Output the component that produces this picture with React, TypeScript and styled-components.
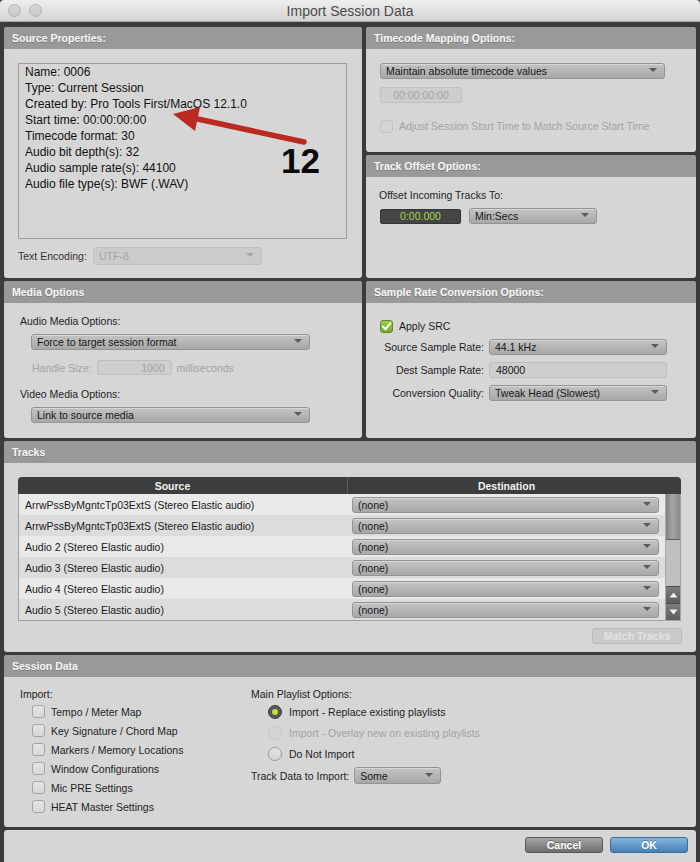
import React from "react";
import styled, { createGlobalStyle } from "styled-components";

type SizeProps = {
  $w: number;
  $h?: number;
  $disabled?: boolean;
};

type RowProps = {
  $alt: boolean;
};

const sourceLines = [
  "Name: 0006",
  "Type: Current Session",
  "Created by: Pro Tools First/MacOS 12.1.0",
  "Start time: 00:00:00:00",
  "Timecode format: 30",
  "Audio bit depth(s): 32",
  "Audio sample rate(s): 44100",
  "Audio file type(s): BWF (.WAV)",
];

const tracks = [
  "ArrwPssByMgntcTp03ExtS (Stereo Elastic audio)",
  "ArrwPssByMgntcTp03ExtS (Stereo Elastic audio)",
  "Audio 2 (Stereo Elastic audio)",
  "Audio 3 (Stereo Elastic audio)",
  "Audio 4 (Stereo Elastic audio)",
  "Audio 5 (Stereo Elastic audio)",
];

const importItems = [
  "Tempo / Meter Map",
  "Key Signature / Chord Map",
  "Markers / Memory Locations",
  "Window Configurations",
  "Mic PRE Settings",
  "HEAT Master Settings",
];

function App() {
  return (
    <>
      <GlobalStyle />
      <Window>
        <TitleBar>
          <Lights>
            <Light />
            <Light />
          </Lights>
          <Title>Import Session Data</Title>
          <span />
        </TitleBar>

        <Content>
          <TwoCols $h={251}>
            <Panel>
              <PanelHeader>Source Properties:</PanelHeader>
              <SourceBody>
                <InfoBox>
                  {sourceLines.map((line) => (
                    <div key={line}>{line}</div>
                  ))}
                </InfoBox>
                <EncodingRow>
                  <EncodingLabel>Text Encoding:</EncodingLabel>
                  <Dropdown $w={169} $h={18} $disabled>
                    UTF-8
                  </Dropdown>
                </EncodingRow>
              </SourceBody>
            </Panel>

            <Stack>
              <Panel $h={125}>
                <PanelHeader>Timecode Mapping Options:</PanelHeader>
                <TimecodeBody>
                  <Dropdown $w={285}>Maintain absolute timecode values</Dropdown>
                  <Field $w={82} $disabled $align="center" style={{ marginTop: 8 }}>
                    00:00:00:00
                  </Field>
                  <CheckRow $top={16}>
                    <CheckBox $disabled />
                    <Label $disabled>Adjust Session Start Time to Match Source Start Time</Label>
                  </CheckRow>
                </TimecodeBody>
              </Panel>
              <Panel $h={123}>
                <PanelHeader>Track Offset Options:</PanelHeader>
                <OffsetBody>
                  <Label>Offset Incoming Tracks To:</Label>
                  <InlineRow>
                    <Counter>0:00.000</Counter>
                    <Dropdown $w={128}>Min:Secs</Dropdown>
                  </InlineRow>
                </OffsetBody>
              </Panel>
            </Stack>
          </TwoCols>

          <TwoCols $h={157}>
            <Panel>
              <PanelHeader>Media Options</PanelHeader>
              <MediaBody>
                <Label>Audio Media Options:</Label>
                <Indented $top={6}>
                  <Dropdown $w={279}>Force to target session format</Dropdown>
                </Indented>
                <HandleRow>
                  <Label $disabled>Handle Size:</Label>
                  <Field $w={75} $h={15} $disabled $align="right">
                    1000
                  </Field>
                  <Label $disabled>milliseconds</Label>
                </HandleRow>
                <Label style={{ marginTop: 12 }}>Video Media Options:</Label>
                <Indented $top={6}>
                  <Dropdown $w={279}>Link to source media</Dropdown>
                </Indented>
              </MediaBody>
            </Panel>

            <Panel>
              <PanelHeader>Sample Rate Conversion Options:</PanelHeader>
              <SrcBody>
                <CheckRow $top={0}>
                  <CheckBox $checked>
                    <svg width="11" height="11" viewBox="0 0 11 11">
                      <path d="M2 5.6 L4.5 8.2 L9.2 2.4" fill="none" stroke="#fff" strokeWidth="2" strokeLinecap="round" strokeLinejoin="round" />
                    </svg>
                  </CheckBox>
                  <Label>Apply SRC</Label>
                </CheckRow>
                <FormGrid>
                  <FormLabel>Source Sample Rate:</FormLabel>
                  <Dropdown $w={178}>44.1 kHz</Dropdown>
                  <FormLabel>Dest Sample Rate:</FormLabel>
                  <Field $w={178} $align="left">
                    48000
                  </Field>
                  <FormLabel>Conversion Quality:</FormLabel>
                  <Dropdown $w={178}>Tweak Head (Slowest)</Dropdown>
                </FormGrid>
              </SrcBody>
            </Panel>
          </TwoCols>

          <Panel $h={211}>
            <PanelHeader>Tracks</PanelHeader>
            <TracksBody>
              <Table>
                <TableHead>
                  <HeadCell $shift={20}>Source</HeadCell>
                  <HeadCell $divider>Destination</HeadCell>
                  <span />
                </TableHead>
                <TableBody>
                  <Rows>
                    {tracks.map((name, i) => (
                      <TrackRow key={i} $alt={i % 2 === 1}>
                        <SourceCell>{name}</SourceCell>
                        <DestCell>
                          <Dropdown $w={307}>(none)</Dropdown>
                        </DestCell>
                      </TrackRow>
                    ))}
                  </Rows>
                  <ScrollBar>
                    <Thumb />
                    <ScrollSpacer />
                    <ScrollButton>
                      <svg width="9" height="6" viewBox="0 0 9 6">
                        <path d="M0.5 5.5 L4.5 0.5 L8.5 5.5 Z" fill="#f2f2f2" />
                      </svg>
                    </ScrollButton>
                    <ScrollButton>
                      <svg width="9" height="6" viewBox="0 0 9 6">
                        <path d="M0.5 0.5 L4.5 5.5 L8.5 0.5 Z" fill="#f2f2f2" />
                      </svg>
                    </ScrollButton>
                  </ScrollBar>
                </TableBody>
              </Table>
              <MatchButton>Match Tracks</MatchButton>
            </TracksBody>
          </Panel>

          <Panel $h={172}>
            <PanelHeader>Session Data</PanelHeader>
            <SessionBody>
              <div>
                <Label>Import:</Label>
                <OptionList>
                  {importItems.map((item) => (
                    <ImportRow key={item}>
                      <CheckBox />
                      <Label>{item}</Label>
                    </ImportRow>
                  ))}
                </OptionList>
              </div>
              <div>
                <Label>Main Playlist Options:</Label>
                <RadioList>
                  <RadioRow>
                    <Radio $selected />
                    <Label>Import - Replace existing playlists</Label>
                  </RadioRow>
                  <RadioRow>
                    <Radio $disabled />
                    <Label $disabled>Import - Overlay new on existing playlists</Label>
                  </RadioRow>
                  <RadioRow>
                    <Radio />
                    <Label>Do Not Import</Label>
                  </RadioRow>
                </RadioList>
                <TrackDataRow>
                  <Label>Track Data to Import:</Label>
                  <Dropdown $w={87} $h={17}>
                    Some
                  </Dropdown>
                </TrackDataRow>
              </div>
            </SessionBody>
          </Panel>

          <ButtonBar>
            <DialogButton>Cancel</DialogButton>
            <DialogButton $primary>OK</DialogButton>
          </ButtonBar>
        </Content>

        <Arrow width="150" height="50" viewBox="0 0 150 50">
          <line x1="144" y1="47" x2="33" y2="23" stroke="#bb2a21" strokeWidth="5.5" strokeLinecap="round" />
          <polygon points="13,19 40,12 35,36" fill="#bb2a21" />
        </Arrow>
        <Callout>12</Callout>
      </Window>
    </>
  );
}

const GlobalStyle = createGlobalStyle`
  html, body {
    margin: 0;
    padding: 0;
    background: #3b3b3b;
  }
  body {
    font-family: "Liberation Sans", Arial, sans-serif;
  }
`;

const Window = styled.div`
  position: relative;
  width: 700px;
  height: 862px;
  overflow: hidden;
  background: #3b3b3b;
  display: flex;
  flex-direction: column;
`;

const TitleBar = styled.div`
  height: 22px;
  flex: none;
  box-sizing: border-box;
  display: grid;
  grid-template-columns: 1fr auto 1fr;
  align-items: center;
  background: linear-gradient(#eeeeee, #d4d4d4);
  border-bottom: 1px solid #a8a8a8;
  border-radius: 4px 4px 0 0;
`;

const Lights = styled.div`
  display: flex;
  gap: 8px;
  padding-left: 8px;
`;

const Light = styled.span`
  width: 11px;
  height: 11px;
  border-radius: 50%;
  background: linear-gradient(#d6d6d6, #c9c9c9);
  border: 1px solid #b4b4b4;
`;

const Title = styled.div`
  font-size: 14px;
  color: #4a4a4a;
`;

const Content = styled.div`
  display: flex;
  flex-direction: column;
  gap: 3px;
  padding: 5px 4px 0;
`;

const TwoCols = styled.div<{ $h: number }>`
  display: grid;
  grid-template-columns: 358px 330px;
  column-gap: 4px;
  height: ${({ $h }) => $h}px;
`;

const Stack = styled.div`
  display: flex;
  flex-direction: column;
  gap: 3px;
`;

const Panel = styled.section<{ $h?: number }>`
  display: flex;
  flex-direction: column;
  background: #d6d6d6;
  border-radius: 3px;
  overflow: hidden;
  ${({ $h }) => ($h ? `height: ${$h}px; flex: none;` : "")}
`;

const PanelHeader = styled.div`
  height: 22px;
  flex: none;
  display: flex;
  align-items: center;
  padding-left: 8px;
  background: #999999;
  color: #f7f7f7;
  font-size: 10.5px;
  font-weight: bold;
  text-shadow: 0 1px 0 rgba(0, 0, 0, 0.2);
`;

const Label = styled.span<{ $disabled?: boolean }>`
  display: block;
  font-size: 10.5px;
  line-height: 14px;
  white-space: nowrap;
  color: ${({ $disabled }) => ($disabled ? "#a3a3a3" : "#1e1e1e")};
`;

const Dropdown = styled.div<SizeProps>`
  position: relative;
  box-sizing: border-box;
  width: ${({ $w }) => $w}px;
  height: ${({ $h }) => $h || 16}px;
  flex: none;
  display: flex;
  align-items: center;
  padding-left: 5px;
  font-size: 10.5px;
  border-radius: 3px;
  white-space: nowrap;
  color: ${({ $disabled }) => ($disabled ? "#a6a6a6" : "#161616")};
  background: ${({ $disabled }) => ($disabled ? "#cbcbcb" : "linear-gradient(#c3c3c3, #a8a8a8)")};
  border: 1px solid ${({ $disabled }) => ($disabled ? "#c2c2c2" : "#949494")};
  box-shadow: ${({ $disabled }) => ($disabled ? "none" : "inset 0 1px 0 rgba(255,255,255,0.35)")};

  &::after {
    content: "";
    position: absolute;
    right: 7px;
    top: 50%;
    margin-top: -3px;
    border-left: 4px solid transparent;
    border-right: 4px solid transparent;
    border-top: 4px solid ${({ $disabled }) => ($disabled ? "#a9a9a9" : "#5b5b5b")};
  }
`;

const Field = styled.div<SizeProps & { $align: "left" | "center" | "right" }>`
  box-sizing: border-box;
  width: ${({ $w }) => $w}px;
  height: ${({ $h }) => $h || 16}px;
  flex: none;
  display: flex;
  align-items: center;
  justify-content: ${({ $align }) => ($align === "left" ? "flex-start" : $align === "right" ? "flex-end" : "center")};
  padding: 0 6px;
  font-size: 10.5px;
  border-radius: 3px;
  background: #cecece;
  border: 1px solid #bfbfbf;
  color: ${({ $disabled }) => ($disabled ? "#a3a3a3" : "#161616")};
`;

const CheckRow = styled.div<{ $top: number }>`
  display: flex;
  align-items: center;
  gap: 6px;
  height: 14px;
  margin-top: ${({ $top }) => $top}px;
`;

const CheckBox = styled.span<{ $checked?: boolean; $disabled?: boolean }>`
  box-sizing: border-box;
  width: 13px;
  height: 13px;
  flex: none;
  display: flex;
  align-items: center;
  justify-content: center;
  border-radius: 3px;
  border: 1px solid ${({ $checked, $disabled }) => ($checked ? "#5f8a25" : $disabled ? "#c4c4c4" : "#a4a4a4")};
  background: ${({ $checked, $disabled }) =>
    $checked ? "linear-gradient(#9fcc4e, #78a82f)" : $disabled ? "#d3d3d3" : "linear-gradient(#e4e4e4, #d8d8d8)"};
`;

const Radio = styled.span<{ $selected?: boolean; $disabled?: boolean }>`
  box-sizing: border-box;
  width: 14px;
  height: 14px;
  flex: none;
  border-radius: 50%;
  display: flex;
  align-items: center;
  justify-content: center;
  border: ${({ $selected, $disabled }) => ($selected ? "1px solid #3f3f3f" : $disabled ? "1px solid #c6c6c6" : "1px solid #9c9c9c")};
  background: ${({ $selected, $disabled }) => ($selected ? "#585858" : $disabled ? "#d4d4d4" : "linear-gradient(#e2e2e2, #d6d6d6)")};

  &::after {
    content: "";
    display: ${({ $selected }) => ($selected ? "block" : "none")};
    width: 6px;
    height: 6px;
    border-radius: 50%;
    background: #b9e23e;
  }
`;

const SourceBody = styled.div`
  padding: 14px 15px 0 14px;
`;

const InfoBox = styled.div`
  box-sizing: border-box;
  height: 176px;
  border: 1px solid #9e9e9e;
  padding: 0 6px;
  font-size: 12px;
  line-height: 16px;
  color: #111;
`;

const EncodingRow = styled.div`
  display: flex;
  align-items: center;
  margin-top: 8px;
`;

const EncodingLabel = styled(Label)`
  width: 75px;
  color: #333;
`;

const TimecodeBody = styled.div`
  padding: 14px 14px 0;
`;

const OffsetBody = styled.div`
  padding: 11px 14px 0 13px;
`;

const InlineRow = styled.div`
  display: flex;
  align-items: center;
  gap: 8px;
  margin-top: 6px;
  padding-left: 1px;
`;

const Counter = styled.div`
  box-sizing: border-box;
  width: 81px;
  height: 15px;
  display: flex;
  align-items: center;
  justify-content: center;
  background: #454545;
  border: 1px solid #363636;
  border-radius: 2px;
  color: #a8d64a;
  font-size: 10.5px;
`;

const MediaBody = styled.div`
  padding: 11px 0 0 16px;
`;

const Indented = styled.div<{ $top: number }>`
  padding-left: 11px;
  margin-top: ${({ $top }) => $top}px;
`;

const HandleRow = styled.div`
  display: flex;
  align-items: center;
  gap: 5px;
  margin-top: 10px;
  padding-left: 12px;
`;

const SrcBody = styled.div`
  padding: 16px 0 0 14px;
`;

const FormGrid = styled.div`
  display: grid;
  grid-template-columns: 104px 178px;
  column-gap: 5px;
  row-gap: 7px;
  align-items: center;
  margin-top: 6px;
`;

const FormLabel = styled(Label)`
  text-align: right;
`;

const TracksBody = styled.div`
  display: flex;
  flex-direction: column;
  padding: 14px 15px 0 14px;
`;

const Table = styled.div`
  display: flex;
  flex-direction: column;
  border-radius: 4px 4px 0 0;
  overflow: hidden;
`;

const TableHead = styled.div`
  display: grid;
  grid-template-columns: 329px 318px 16px;
  height: 17px;
  background: #3d3d3d;
`;

const HeadCell = styled.div<{ $divider?: boolean; $shift?: number }>`
  display: flex;
  align-items: center;
  justify-content: center;
  padding-right: ${({ $shift }) => $shift || 0}px;
  color: #f2f2f2;
  font-size: 10.5px;
  font-weight: bold;
  border-left: ${({ $divider }) => ($divider ? "1px solid #5a5a5a" : "none")};
`;

const TableBody = styled.div`
  display: flex;
  border: 1px solid #a3a3a3;
  border-top: none;
`;

const Rows = styled.div`
  display: flex;
  flex-direction: column;
  width: 646px;
`;

const TrackRow = styled.div<RowProps>`
  display: grid;
  grid-template-columns: 328px 318px;
  height: 21px;
  align-items: center;
  background: ${({ $alt }) => ($alt ? "#dcdcdc" : "#e9e9e9")};
`;

const SourceCell = styled.div`
  padding-left: 6px;
  font-size: 10.5px;
  color: #1a1a1a;
  white-space: nowrap;
`;

const DestCell = styled.div`
  padding-left: 5px;
`;

const ScrollBar = styled.div`
  width: 16px;
  display: flex;
  flex-direction: column;
  background: #c0c0c0;
  border-left: 1px solid #a9a9a9;
`;

const Thumb = styled.div`
  height: 45px;
  background: linear-gradient(90deg, #7f7f7f, #a6a6a6 45%, #8a8a8a);
  border-bottom: 1px solid #5f5f5f;
`;

const ScrollSpacer = styled.div`
  flex: 1;
`;

const ScrollButton = styled.div`
  height: 16px;
  display: flex;
  align-items: center;
  justify-content: center;
  background: linear-gradient(#7d7d7d, #5c5c5c);
  border-top: 1px solid #4c4c4c;
`;

const MatchButton = styled.div`
  align-self: flex-end;
  margin: 7px -1px 0 0;
  box-sizing: border-box;
  width: 90px;
  height: 16px;
  display: flex;
  align-items: center;
  justify-content: center;
  border-radius: 3px;
  background: #cacaca;
  border: 1px solid #bcbcbc;
  color: #e2e2e2;
  font-size: 10.5px;
  font-weight: bold;
`;

const SessionBody = styled.div`
  display: grid;
  grid-template-columns: 231px auto;
  padding: 10px 0 0 16px;
`;

const OptionList = styled.div`
  display: flex;
  flex-direction: column;
  margin-top: 1px;
  padding-left: 12px;
`;

const ImportRow = styled.div`
  display: flex;
  align-items: center;
  gap: 6px;
  height: 19px;
`;

const RadioList = styled.div`
  display: flex;
  flex-direction: column;
  padding-left: 17px;
`;

const RadioRow = styled.div`
  display: flex;
  align-items: center;
  gap: 7px;
  height: 21px;
`;

const TrackDataRow = styled.div`
  display: flex;
  align-items: center;
  gap: 5px;
  margin-top: 3px;
`;

const ButtonBar = styled.div`
  height: 32px;
  display: flex;
  justify-content: flex-end;
  align-items: flex-start;
  gap: 7px;
  padding: 7px 8px 0 0;
  box-sizing: border-box;
  background: #d6d6d6;
  border-radius: 3px 3px 0 0;
`;

const DialogButton = styled.div<{ $primary?: boolean }>`
  box-sizing: border-box;
  width: 78px;
  height: 16px;
  display: flex;
  align-items: center;
  justify-content: center;
  border-radius: 3px;
  font-size: 10.5px;
  font-weight: bold;
  color: #fff;
  text-shadow: 0 -1px 0 rgba(0, 0, 0, 0.3);
  background: ${({ $primary }) => ($primary ? "linear-gradient(#86b6de, #4580b5)" : "linear-gradient(#a5a5a5, #6e6e6e)")};
  border: 1px solid ${({ $primary }) => ($primary ? "#3d6d9b" : "#595959")};
`;

const Arrow = styled.svg`
  position: absolute;
  left: 160px;
  top: 95px;
`;

const Callout = styled.div`
  position: absolute;
  left: 281px;
  top: 143px;
  font-size: 35px;
  line-height: 1;
  font-weight: bold;
  color: #0a0a0a;
`;

export default App;
